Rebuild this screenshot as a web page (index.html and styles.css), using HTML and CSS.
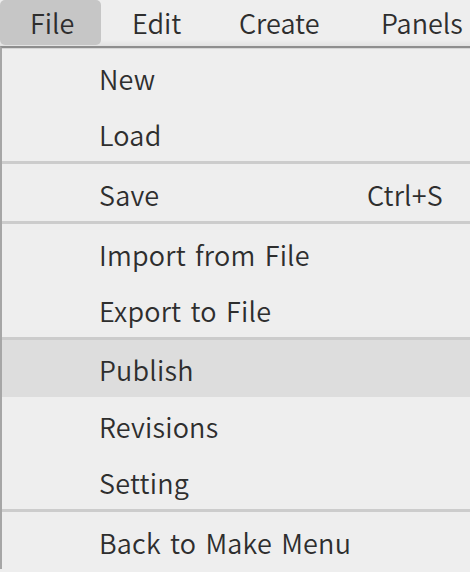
FILE: index.html
```html
<!DOCTYPE html>
<html>
<head>
<meta charset="utf-8">
<link rel="stylesheet" href="styles.css">
</head>
<body>
<div class="menubar">
  <div class="tab tab-file active">File</div>
  <div class="tab tab-edit">Edit</div>
  <div class="tab tab-create">Create</div>
  <div class="tab tab-panels">Panels</div>
</div>
<div class="menu">
  <div class="group">
    <div class="item">New</div>
    <div class="item">Load</div>
  </div>
  <div class="group">
    <div class="item"><span>Save</span><span class="key">Ctrl+S</span></div>
  </div>
  <div class="group">
    <div class="item">Import from File</div>
    <div class="item">Export to File</div>
  </div>
  <div class="group">
    <div class="item hover">Publish</div>
    <div class="item">Revisions</div>
    <div class="item">Setting</div>
  </div>
  <div class="group">
    <div class="item">Back to Make Menu</div>
  </div>
</div>
</body>
</html>
```
FILE: styles.css
```css
html, body {
  margin: 0;
  padding: 0;
  background: #eeeeee;
  font-family: "Noto Sans CJK KR", "Noto Sans", sans-serif;
  font-weight: 350;
  color: #2e2e2e;
  overflow: hidden;
}
.menubar {
  display: flex;
  height: 46px;
  background: linear-gradient(#eeeeee 0, #eeeeee 40px, #e2e2e2 46px);
}
.tab {
  flex: none;
  box-sizing: border-box;
  padding-left: 31px;
  font-size: 27px;
  line-height: 45px;
  height: 45px;
  letter-spacing: 0;
  white-space: nowrap;
}
.tab-file { width: 101px; padding-left: 30px; }
.tab-edit { width: 107px; }
.tab-create { width: 142px; }
.tab-panels { flex: 1; }
.tab.active {
  background: #c6c6c6;
  border-radius: 5px;
}
.menu {
  border-top: 2px solid #8e8e8e;
  border-left: 2px solid #a6a6a6;
  box-shadow: inset 0 1px 0 #d6d6d6;
  padding-top: 1px;
  background: #eeeeee;
}
.group + .group {
  border-top: 3px solid #cccccc;
  padding-top: 1px;
}
.item {
  display: flex;
  justify-content: space-between;
  align-items: center;
  box-sizing: border-box;
  height: 56px;
  padding: 2px 27px 0 97px;
  font-size: 27px;
  letter-spacing: 0.2px;
  word-spacing: 3px;
}
.group + .group .item.hover {
  margin-top: -1px;
  height: 57px;
}
.item.hover {
  background: #dddddd;
}
```
